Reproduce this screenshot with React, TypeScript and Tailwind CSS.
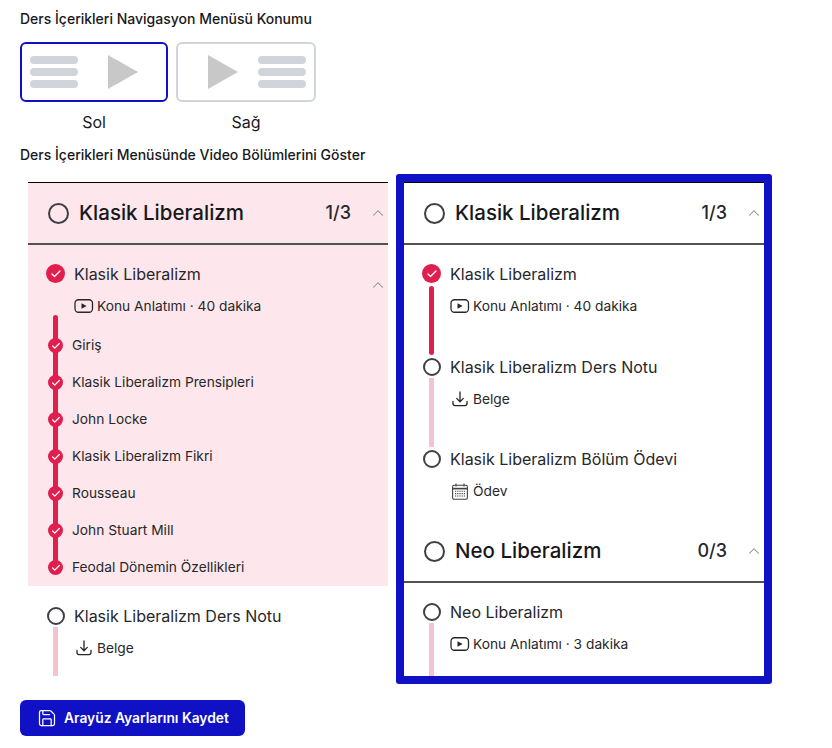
import { ChevronUp, Check, Save } from "lucide-react"

const crimson = "bg-[#e01f4e]"

function Bars() {
  return (
    <div className="flex flex-col gap-1">
      <div className="h-2 w-12 rounded-full bg-[#d1d5db]" />
      <div className="h-2 w-12 rounded-full bg-[#d1d5db]" />
      <div className="h-2 w-12 rounded-full bg-[#d1d5db]" />
    </div>
  )
}

function PlayShape() {
  return (
    <svg width="30" height="34" viewBox="0 0 30 34">
      <path d="M0 0L30 17L0 34Z" fill="#c8c8c8" />
    </svg>
  )
}

function VideoIcon() {
  return (
    <svg width="20" height="16" viewBox="0 0 20 16" fill="none" className="shrink-0">
      <rect x="1" y="1.75" width="17.5" height="12.5" rx="3.5" stroke="#27272a" strokeWidth="1.3" />
      <path d="M7.5 5.2L12.6 8L7.5 10.8Z" fill="#27272a" />
    </svg>
  )
}

function DownloadIcon() {
  return (
    <svg width="16" height="16" viewBox="0 0 16 16" fill="none" stroke="#27272a" strokeWidth="1.3" strokeLinecap="round" strokeLinejoin="round" className="shrink-0">
      <path d="M8 1V10.5M4.7 7.4L8 10.7L11.3 7.4" />
      <path d="M1 10.5V12.6C1 14 1.8 14.7 3 14.7H13C14.2 14.7 15 14 15 12.6V10.5" />
    </svg>
  )
}

function CalendarIcon() {
  return (
    <svg width="16" height="17" viewBox="0 0 16 17" fill="none" stroke="#3f3f46" strokeWidth="1.1" className="shrink-0">
      <rect x="0.6" y="2.2" width="14.8" height="14" rx="1.5" />
      <path d="M0.6 5.6H15.4" strokeWidth="1.6" />
      <path d="M4 0.6V3.6M12 0.6V3.6" />
      <path d="M3 8.2H13M3 10.6H13M3 13H13" strokeDasharray="1.2 1" />
    </svg>
  )
}

function EmptyDot({ size }: { size: string }) {
  return <div className={`${size} shrink-0 rounded-full border-2 border-[#3f3f46]`} />
}

function CheckDot() {
  return (
    <div className={`flex h-[19px] w-[19px] shrink-0 items-center justify-center rounded-full ${crimson}`}>
      <Check className="h-3 w-3 text-white" strokeWidth={2.5} />
    </div>
  )
}

function SubLine({ icon, text }: { icon: React.ReactNode; text: string }) {
  return (
    <div className="mt-3 flex items-center gap-[3px] text-[13.75px] leading-5 text-[#27272a]">
      <div className="flex w-5 justify-center">{icon}</div>
      <span>{text}</span>
    </div>
  )
}

function SectionHeader({ title, count, topLine, pink }: { title: string; count: string; topLine?: boolean; pink?: boolean }) {
  return (
    <div
      className={`flex items-center border-b-2 border-[#525252] pl-5 pr-[1px] ${topLine ? "h-[63px] border-t border-t-black" : "h-[62px]"} ${pink ? "bg-[#fde7ec]" : ""}`}
    >
      <EmptyDot size="h-[21px] w-[21px]" />
      <div className="ml-[10px] flex-1 text-[20.5px] font-medium text-[#18181b]">{title}</div>
      <div className="text-lg font-medium text-[#27272a]">{count}</div>
      <ChevronUp className="ml-[18px] h-[18px] w-[18px] text-[#8a8a92]" strokeWidth={1.4} />
    </div>
  )
}

function Lesson({
  title,
  sub,
  icon,
  done,
  line,
}: {
  title: string
  sub: string
  icon: React.ReactNode
  done?: boolean
  line?: "done" | "todo"
}) {
  return (
    <div className={`flex pl-[18px] ${done ? "h-[93px]" : line ? "h-[92px]" : "h-[72px]"}`}>
      <div className="flex w-[19px] shrink-0 flex-col items-center">
        {done ? (
          <CheckDot />
        ) : (
          <div className="mt-px">
            <EmptyDot size="h-[18px] w-[18px]" />
          </div>
        )}
        {line === "done" && <div className={`mt-[3px] mb-[2px] w-[5px] flex-1 rounded-full ${crimson}`} />}
        {line === "todo" && <div className="mt-[2px] mb-[2px] w-[5px] flex-1 bg-[#f5c2cf]" />}
      </div>
      <div className="ml-[9px]">
        <div className="text-base leading-5 text-[#27272a]">{title}</div>
        <SubLine icon={icon} text={sub} />
      </div>
    </div>
  )
}

const videoParts = [
  "Giriş",
  "Klasik Liberalizm Prensipleri",
  "John Locke",
  "Klasik Liberalizm Fikri",
  "Rousseau",
  "John Stuart Mill",
  "Feodal Dönemin Özellikleri",
]

function LeftPreview() {
  return (
    <div className="ml-2 h-[494px] w-[360px] shrink-0 overflow-hidden">
      <SectionHeader title="Klasik Liberalizm" count="1/3" topLine pink />
      <div className="bg-[#fde7ec] pt-[19px]">
        <div className="relative flex pl-[18px]">
          <CheckDot />
          <div className="ml-[9px]">
            <div className="text-base leading-5 text-[#27272a]">Klasik Liberalizm</div>
            <SubLine icon={<VideoIcon />} text="Konu Anlatımı · 40 dakika" />
          </div>
          <ChevronUp className="absolute top-[12px] right-[1px] h-[18px] w-[18px] text-[#8a8a92]" strokeWidth={1.4} />
        </div>
        <div className="relative mt-[11px]">
          <div className={`absolute top-[-12px] bottom-[18px] left-[25px] w-[5px] rounded-full ${crimson}`} />
          {videoParts.map((part) => (
            <div key={part} className="relative flex h-[37px] items-center pl-5">
              <div className={`flex h-[15px] w-[15px] shrink-0 items-center justify-center rounded-full ${crimson}`}>
                <Check className="h-[10px] w-[10px] text-white" strokeWidth={3} />
              </div>
              <span className="ml-[9px] text-[13.75px] text-[#27272a]">{part}</span>
            </div>
          ))}
        </div>
      </div>
      <div className="pt-5">
        <Lesson title="Klasik Liberalizm Ders Notu" sub="Belge" icon={<DownloadIcon />} line="todo" />
      </div>
    </div>
  )
}

function RightPreview() {
  return (
    <div className="ml-2 h-[510px] w-[376px] shrink-0 overflow-hidden rounded-[3px] border-8 border-[#1010c4]">
      <SectionHeader title="Klasik Liberalizm" count="1/3" topLine />
      <div className="pt-[19px]">
        <Lesson title="Klasik Liberalizm" sub="Konu Anlatımı · 40 dakika" icon={<VideoIcon />} done line="done" />
        <Lesson title="Klasik Liberalizm Ders Notu" sub="Belge" icon={<DownloadIcon />} line="todo" />
        <Lesson title="Klasik Liberalizm Bölüm Ödevi" sub="Ödev" icon={<CalendarIcon />} />
      </div>
      <SectionHeader title="Neo Liberalizm" count="0/3" />
      <div className="pt-[19px]">
        <Lesson title="Neo Liberalizm" sub="Konu Anlatımı · 3 dakika" icon={<VideoIcon />} line="todo" />
      </div>
    </div>
  )
}

export default function App() {
  return (
    <div className="h-[748px] w-[832px] overflow-hidden bg-white pt-[10px] pl-5 font-['Inter',sans-serif] text-[#18181b]">
      <div className="text-sm leading-[18px] font-medium">Ders İçerikleri Navigasyon Menüsü Konumu</div>
      <div className="mt-[14px] flex gap-2">
        <div className="flex flex-col items-center">
          <div className="flex h-[60px] w-[148px] items-center gap-[30px] rounded-md border-2 border-[#1010c4] pl-2">
            <Bars />
            <PlayShape />
          </div>
          <div className="mt-[10px] text-base leading-5">Sol</div>
        </div>
        <div className="flex flex-col items-center">
          <div className="flex h-[60px] w-[140px] items-center gap-5 rounded-md border-2 border-[#d1d5db] pl-[30px]">
            <PlayShape />
            <Bars />
          </div>
          <div className="mt-[10px] text-base leading-5">Sağ</div>
        </div>
      </div>
      <div className="mt-[14px] text-sm leading-[18px] font-medium">Ders İçerikleri Menüsünde Video Bölümlerini Göster</div>
      <div className="mt-[10px] flex items-start">
        <div className="pt-2">
          <LeftPreview />
        </div>
        <RightPreview />
      </div>
      <button className="mt-4 flex h-9 w-[225px] items-center gap-[7px] rounded-md bg-[#1010c4] pl-[17px] text-[13.8px] font-semibold text-white">
        <Save className="h-5 w-5" strokeWidth={1.5} />
        Arayüz Ayarlarını Kaydet
      </button>
    </div>
  )
}
